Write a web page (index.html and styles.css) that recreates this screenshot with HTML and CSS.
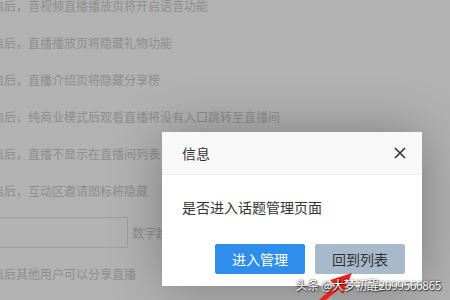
FILE: index.html
```html
<!DOCTYPE html>
<html lang="zh-CN">

<head>
    <meta charset="UTF-8">
    <meta name="viewport" content="width=device-width, initial-scale=1.0">
    <title>直播设置</title>

    <link rel="stylesheet" href="styles.css">
</head>

<body>
    <div class="settings">
        <div class="tip-row">开启后，音视频直播播放页将开启语音功能</div>
        <div class="tip-row">开启后，直播播放页将隐藏礼物功能</div>
        <div class="tip-row">开启后，直播介绍页将隐藏分享榜</div>
        <div class="tip-row">开启后，纯商业模式后观看直播将没有入口跳转至直播间</div>
        <div class="tip-row">开启后，直播不显示在直播间列表</div>
        <div class="tip-row">开启后，互动区邀请图标将隐藏</div>
        <div class="input-row">
            <input class="sort-input" type="text">
            <span class="input-tip">数字越大越靠前</span>
        </div>
        <div class="tip-row">开启后其他用户可以分享直播</div>
    </div>

    <div class="shade"></div>

    <div class="dialog">
        <div class="dialog-title">
            <span>信息</span>
            <svg class="dialog-close" width="12" height="12" viewBox="0 0 12 12">
                <path d="M1 1 L11 11 M11 1 L1 11" stroke="#333" stroke-width="1.6" fill="none"/>
            </svg>
        </div>
        <div class="dialog-content">是否进入话题管理页面</div>
        <div class="dialog-btns">
            <a class="btn btn-primary">进入管理</a>
            <a class="btn btn-back">回到列表</a>
        </div>
    </div>

    <svg class="arrow" width="60" height="40" viewBox="0 0 60 40">
        <path d="M10 42 L38 19" stroke="#e8231b" stroke-width="4.5" fill="none"/>
        <polygon points="52,5 30,12 43,26" fill="#e8231b"/>
    </svg>

    <div class="watermark">头条 @大梦初醒2099566865</div>
</body>

</html>
```

FILE: styles.css
```css
body {
    margin: 0;
    width: 450px;
    height: 300px;
    overflow: hidden;
    background-color: #fff;
    font-family: "Noto Sans CJK SC", "Noto Sans", sans-serif;
}

.settings {
    margin-top: -13px;
    margin-left: -20px;
    font-size: 12px;
    color: #ccc;
}

.tip-row {
    height: 37px;
    line-height: 37px;
    white-space: nowrap;
}

.input-row {
    height: 46px;
    display: flex;
    align-items: center;
}

.sort-input {
    width: 148px;
    height: 31px;
    box-sizing: border-box;
    border: 1px solid #e6e6e6;
    background: #fff;
    margin: 0;
}

.input-tip {
    margin-left: 4px;
    white-space: nowrap;
}

.shade {
    position: absolute;
    left: 0;
    top: 0;
    width: 450px;
    height: 300px;
    background-color: rgba(0, 0, 0, 0.3);
}

.dialog {
    position: absolute;
    left: 162px;
    top: 132px;
    width: 260px;
    background-color: #fff;
    box-shadow: 1px 1px 50px rgba(0, 0, 0, 0.3);
    color: #333;
    font-size: 14px;
}

.dialog-title {
    height: 42px;
    background-color: #f8f8f8;
    border-bottom: 1px solid #eee;
    padding: 0 16px 0 20px;
    display: flex;
    align-items: center;
    justify-content: space-between;
}

.dialog-content {
    padding: 20px;
    line-height: 24px;
}

.dialog-btns {
    display: flex;
    justify-content: flex-end;
    gap: 10px;
    padding: 5px 17px 12px 0;
}

.btn {
    height: 30px;
    line-height: 28px;
    box-sizing: border-box;
    padding: 0 16px;
    border: 1px solid transparent;
    border-radius: 2px;
    font-size: 14px;
    cursor: pointer;
}

.btn-primary {
    background-color: #2f8eec;
    border-color: #2f8eec;
    color: #fff;
}

.btn-back {
    background-color: #a8b9cc;
    border-color: #a8b9cc;
    color: #333;
}

.arrow {
    position: absolute;
    left: 300px;
    top: 268px;
}

.watermark {
    position: absolute;
    right: 9px;
    top: 276px;
    font-size: 12px;
    letter-spacing: -0.4px;
    color: #fff;
    white-space: nowrap;
    text-shadow: 0 0 2px rgba(0, 0, 0, 0.8), 1px 1px 1px rgba(0, 0, 0, 0.6);
}
```
